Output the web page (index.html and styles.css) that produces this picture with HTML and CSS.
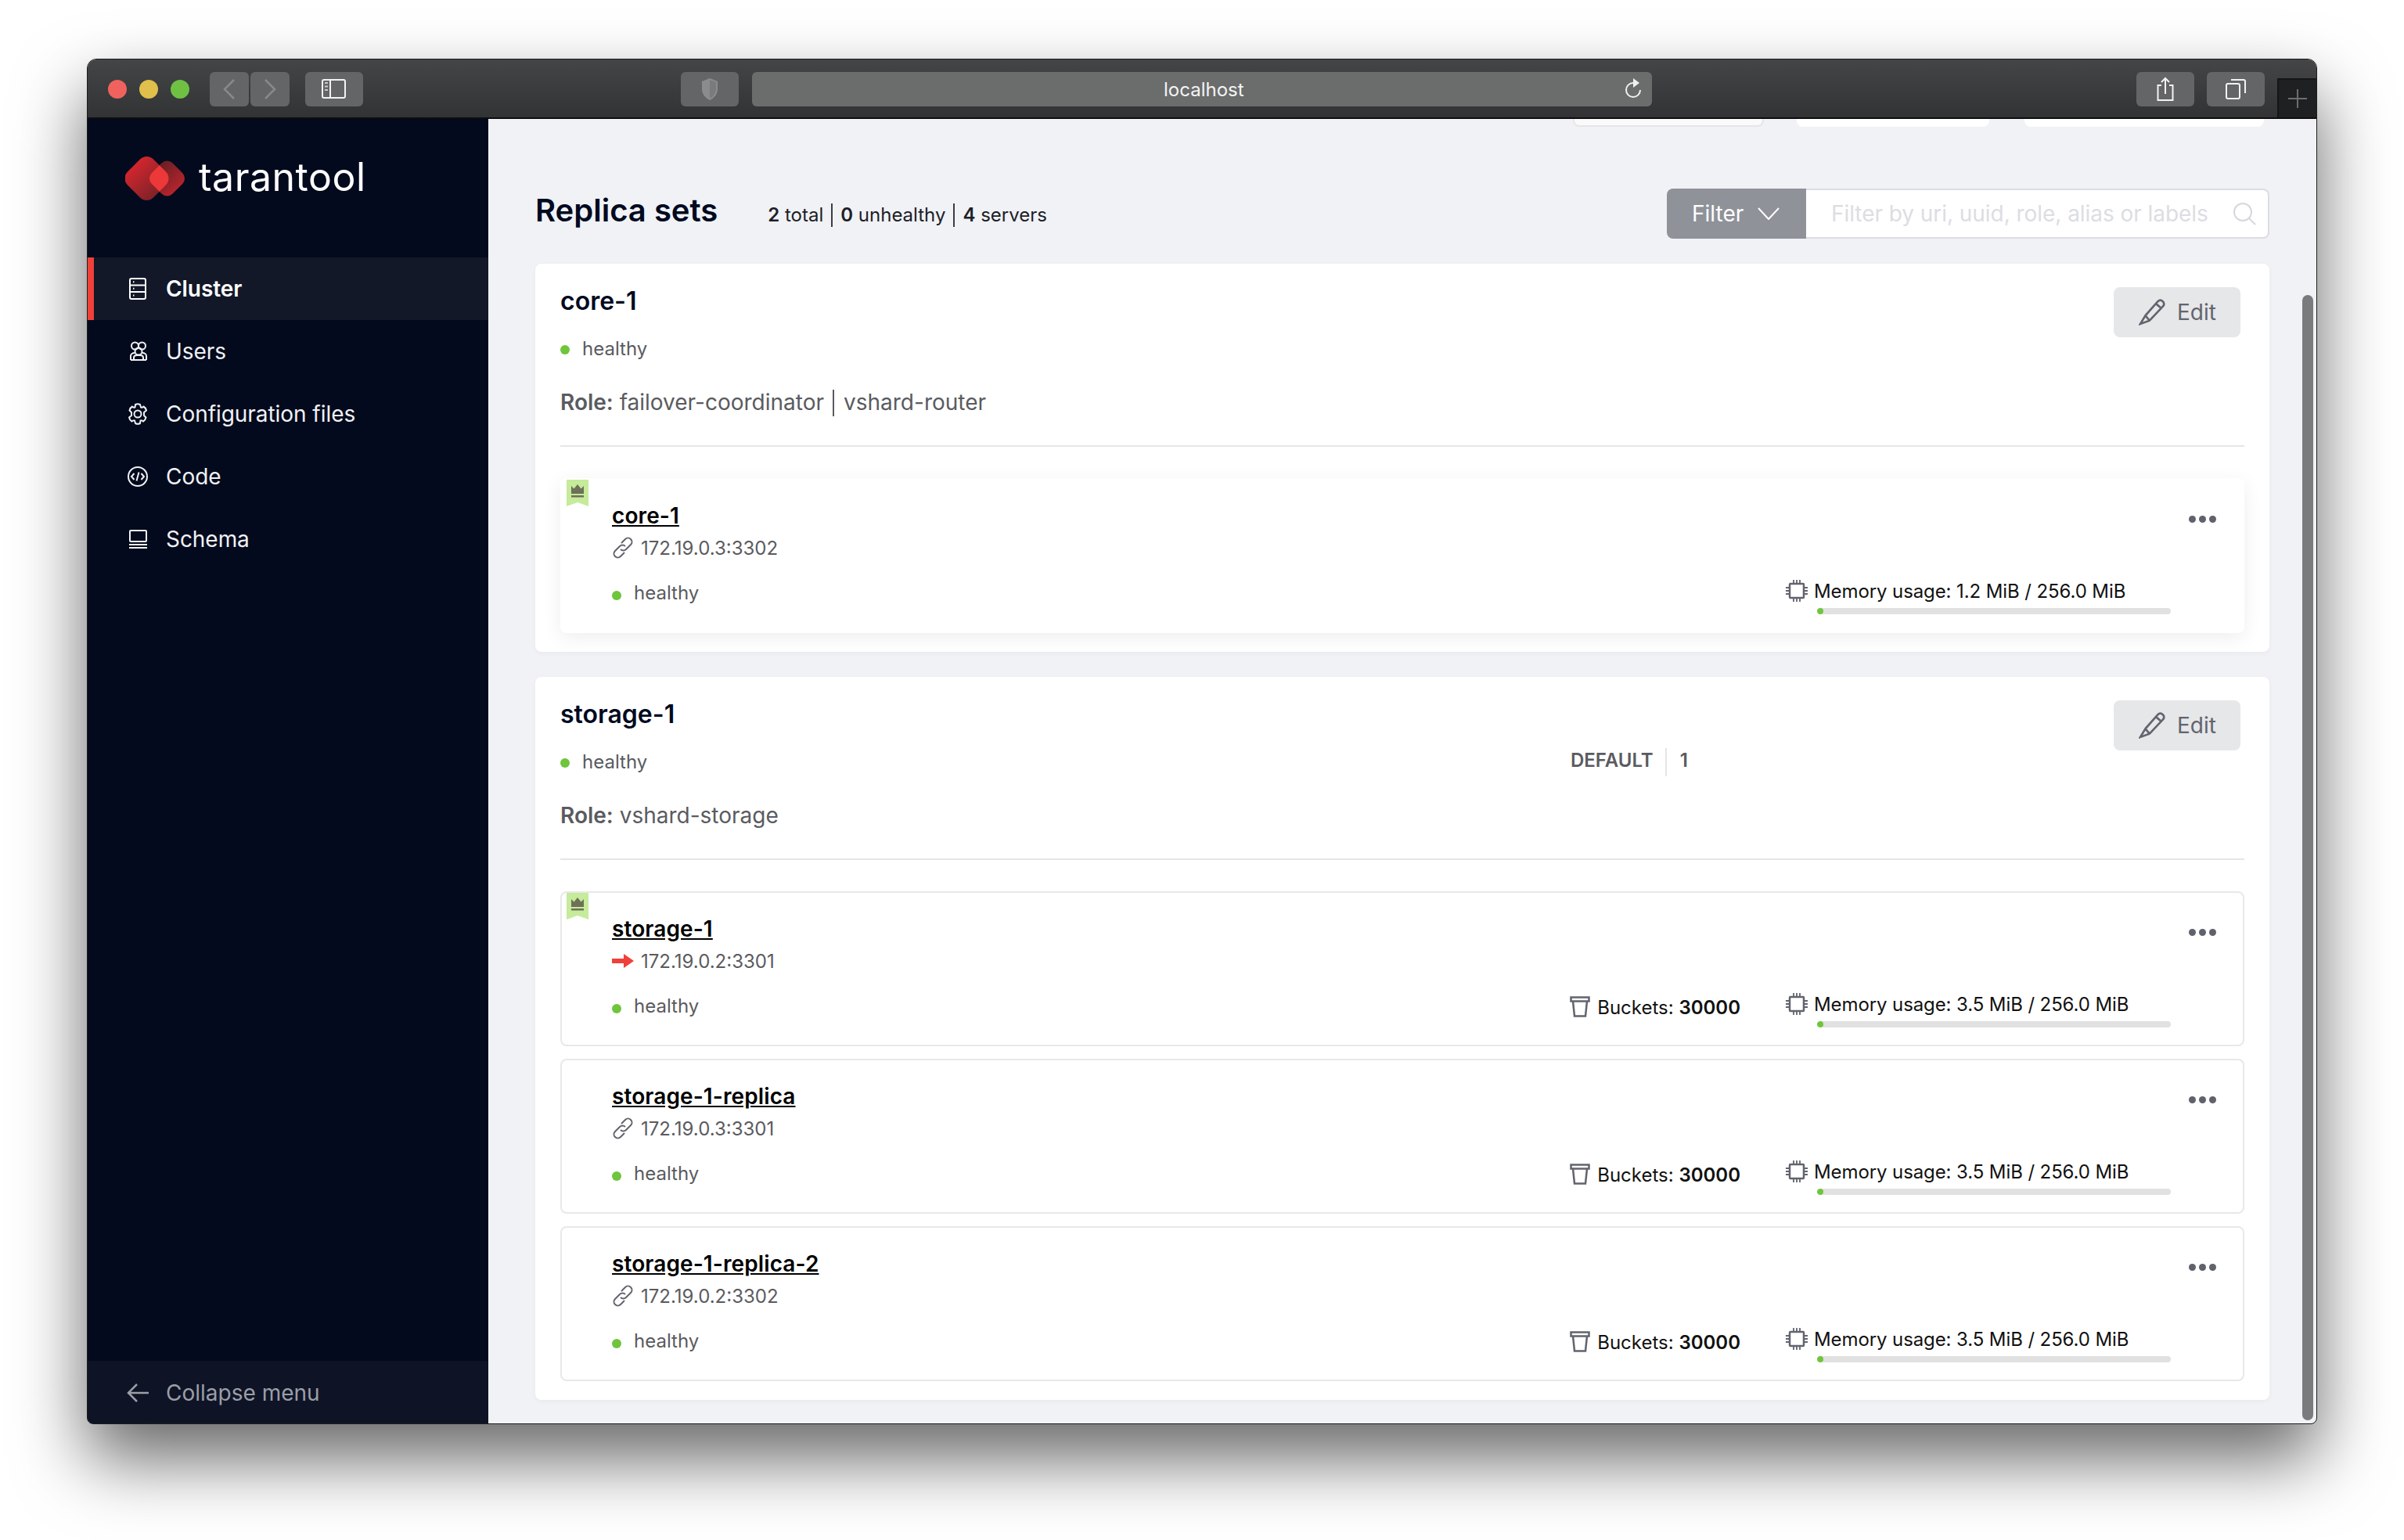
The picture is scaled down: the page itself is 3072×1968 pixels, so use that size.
FILE: index.html
```html
<!DOCTYPE html>
<html lang="en">
<head>
    <meta charset="UTF-8">
    <title>localhost</title>
    <link rel="stylesheet" href="styles.css">
</head>
<body>
    <div class="window">
        <header class="titlebar">
            <div class="lights">
                <span class="light light-red"></span>
                <span class="light light-yellow"></span>
                <span class="light light-green"></span>
            </div>
            <div class="tool tool-nav">
                <svg width="24" height="32" viewBox="0 0 24 32"><path d="M18 4 6 16l12 12" fill="none" stroke="#88898b" stroke-width="2.5"/></svg>
            </div>
            <div class="tool tool-nav tool-next">
                <svg width="24" height="32" viewBox="0 0 24 32"><path d="M6 4l12 12L6 28" fill="none" stroke="#88898b" stroke-width="2.5"/></svg>
            </div>
            <div class="tool tool-side">
                <svg width="32" height="26" viewBox="0 0 32 26"><rect x="1" y="1" width="29" height="23" rx="2" fill="none" stroke="#f2f2f2" stroke-width="2"/><path d="M11 1v23" stroke="#f2f2f2" stroke-width="2"/><path d="M4 5h4M4 9.500h4M4 14h4" stroke="#c9c9c9" stroke-width="2"/></svg>
            </div>
            <div class="tool tool-shield">
                <svg width="26" height="30" viewBox="0 0 26 30"><path d="M13 1 3 5v10c0 6 4 11 10 14 6-3 10-8 10-14V5z" fill="#8b8c8d"/><path d="M13 3v24c4-2 8-7 8-12V6z" fill="#7a7b7c"/></svg>
            </div>
            <div class="urlbar">
                <span class="url-text">localhost</span>
                <svg class="reload" width="24" height="28" viewBox="0 0 24 28"><path d="M12 6a9 9 0 1 0 9 9" fill="none" stroke="#f0f0f0" stroke-width="2"/><path d="M12 0l8 6-8 6z" fill="#f0f0f0"/></svg>
            </div>
            <div class="tool tool-share">
                <svg width="24" height="32" viewBox="0 0 24 32"><path d="M7 11H2.500v19h19V11H17" fill="none" stroke="#f2f2f2" stroke-width="2"/><path d="M12 22V2M7 7l5-5 5 5" fill="none" stroke="#f2f2f2" stroke-width="2"/></svg>
            </div>
            <div class="tool tool-tabs">
                <svg width="26" height="26" viewBox="0 0 26 26"><rect x="1" y="6" width="17" height="19" rx="2" fill="none" stroke="#f2f2f2" stroke-width="2"/><path d="M7 1h16a2 2 0 0 1 2 2v15" fill="none" stroke="#f2f2f2" stroke-width="2"/></svg>
            </div>
            <div class="newtab">
                <svg width="24" height="24" viewBox="0 0 24 24"><path d="M12 0v24M0 12h24" stroke="#6d6e70" stroke-width="2"/></svg>
            </div>
        </header>

        <div class="app">
            <aside class="sidebar">
                <div class="brand">
                    <svg class="brand-mark" width="78" height="58" viewBox="0 0 78 58">
                        <defs>
                            <linearGradient id="leftLobe" gradientUnits="userSpaceOnUse" x1="0" x2="56" y1="0" y2="0">
                                <stop offset="0" stop-color="#d9262f"/>
                                <stop offset="1" stop-color="#752227"/>
                            </linearGradient>
                            <linearGradient id="rightLobe" gradientUnits="userSpaceOnUse" x1="30" x2="77" y1="0" y2="0">
                                <stop offset="0" stop-color="#5f1e24"/>
                                <stop offset="1" stop-color="#bd252d"/>
                            </linearGradient>
                            <clipPath id="overlap">
                                <rect x="4.200" y="4.700" width="46.600" height="46.600" rx="12" transform="rotate(45 27.500 28)"/>
                            </clipPath>
                        </defs>
                        <rect x="34.650" y="9.150" width="37.700" height="37.700" rx="10" fill="url(#rightLobe)" transform="rotate(45 53.500 28)"/>
                        <rect x="4.200" y="4.700" width="46.600" height="46.600" rx="12" fill="url(#leftLobe)" transform="rotate(45 27.500 28)"/>
                        <g clip-path="url(#overlap)">
                            <rect x="34.650" y="9.150" width="37.700" height="37.700" rx="10" fill="#ec3838" transform="rotate(45 53.500 28)"/>
                        </g>
                    </svg>
                    <span class="brand-name">tarantool</span>
                </div>
                <nav class="nav">
                    <a class="nav-item nav-item-active">
                        <svg class="nav-icon" width="28" height="28" viewBox="0 0 28 28" fill="none" stroke="currentColor" stroke-width="2"><rect x="4" y="1" width="20" height="26" rx="2"/><path d="M4 9.500h20M4 18h20"/><path d="M8 5.200h1.500M8 13.700h1.500M8 22.500h1.500"/></svg>
                        Cluster
                    </a>
                    <a class="nav-item">
                        <svg class="nav-icon" width="28" height="28" viewBox="0 0 28 28" fill="none" stroke="currentColor" stroke-width="2"><circle cx="10.500" cy="7" r="4.500"/><circle cx="19.500" cy="7" r="4.500"/><circle cx="15" cy="14" r="4.500"/><path d="M5 25v-5c0-2 2-4 5-4M25 25v-5c0-2-2-4-5-4M5 25h20M9 25v-3c0-2 2-3 4-3h4c2 0 4 1 4 3v3"/></svg>
                        Users
                    </a>
                    <a class="nav-item">
                        <svg class="nav-icon" width="28" height="28" viewBox="0 0 28 28" fill="none" stroke="currentColor" stroke-width="2"><path d="M11 2c2-1 4-1 6 0l1 3.500c1 .5 2 .5 3.500-1 2 1 3 3 3.500 5L22 12v4l2.500 2.500c-.5 2-1.500 4-3.500 5-1.500-1.500-2.500-1.500-3.500-1L17 26c-2 1-4 1-6 0l-1-3.500c-1-.5-2-.5-3.500 1-2-1-3-3-3.500-5L6 16v-4L3.500 9.500c.5-2 1.500-4 3.500-5 1.500 1.500 2.500 1.500 3.500 1z" stroke-linejoin="round"/><circle cx="14" cy="14" r="4.500"/></svg>
                        Configuration files
                    </a>
                    <a class="nav-item">
                        <svg class="nav-icon" width="28" height="28" viewBox="0 0 28 28" fill="none" stroke="currentColor" stroke-width="2"><circle cx="14" cy="14" r="12"/><path d="M9.500 10 6 14l3.500 4M18.500 10l3.500 4-3.500 4M15.500 8.500l-3 11"/></svg>
                        Code
                    </a>
                    <a class="nav-item">
                        <svg class="nav-icon" width="28" height="28" viewBox="0 0 28 28" fill="none" stroke="currentColor" stroke-width="2"><rect x="4" y="3" width="21" height="14" rx="1"/><path d="M3 21h23M3 25h23"/></svg>
                        Schema
                    </a>
                </nav>
                <div class="collapse">
                    <svg width="28" height="26" viewBox="0 0 28 26" fill="none" stroke="currentColor" stroke-width="2.500"><path d="M28 13H2M13 2 2 13l11 11"/></svg>
                    Collapse menu
                </div>
            </aside>

            <main class="main">
                <div class="peek">
                    <span class="peek-box peek-box-line"></span>
                    <span class="peek-box peek-box-mid"></span>
                    <span class="peek-box peek-box-end"></span>
                </div>

                <div class="page-head">
                    <h1 class="page-title">Replica sets</h1>
                    <div class="stats">
                        <span class="stat"><b>2</b> total</span>
                        <span class="stat"><b>0</b> unhealthy</span>
                        <span class="stat"><b>4</b> servers</span>
                    </div>
                    <div class="filter">
                        <div class="filter-btn">
                            Filter
                            <svg width="28" height="16" viewBox="0 0 28 16" fill="none" stroke="#fff" stroke-width="2"><path d="M1 1l13 14L27 1"/></svg>
                        </div>
                        <div class="filter-input">
                            <span class="placeholder">Filter by uri, uuid, role, alias or labels</span>
                            <svg width="30" height="30" viewBox="0 0 30 30" fill="none" stroke="#d6d7dc" stroke-width="2"><circle cx="13" cy="13" r="11"/><path d="M21 21l8 8"/></svg>
                        </div>
                    </div>
                </div>

                <section class="card">
                    <div class="card-head">
                        <h2 class="card-title">core-1</h2>
                        <button class="edit">
                            <svg width="34" height="34" viewBox="0 0 32 32" fill="none" stroke="currentColor" stroke-width="2.500"><path d="M8 20 23 3c2-2 4-2 6 0s2 4 0 6L13 26l-11 4zM21 6l6 5M8 20l5 6"/></svg>
                            Edit
                        </button>
                    </div>
                    <div class="card-status">
                        <div class="status status-head"><span class="dot"></span>healthy</div>
                    </div>
                    <p class="role"><b>Role:</b> failover-coordinator<span class="role-sep"></span>vshard-router</p>
                    <hr class="divider">
                    <div class="instances">
                        <article class="instance instance-lifted">
                            <svg class="leader" width="28" height="34" viewBox="0 0 28 34"><path d="M0 0h28v34l-14-5-14 5z" fill="#c5eb9b"/><path d="M6 8l3.500 3.500L14 6l4.500 5.500L22 8v10H6z" fill="#6f7058"/><path d="M6 20h16v2.500H6z" fill="#6f7058"/></svg>
                            <div class="instance-top">
                                <a class="instance-name">core-1</a>
                                <div class="kebab"><span></span><span></span><span></span></div>
                            </div>
                            <div class="uri">
                                <svg width="28" height="28" viewBox="0 0 28 28" fill="none" stroke="#62646e" stroke-width="2"><path d="M12 8l5-5c2-2 5-2 7 0s2 5 0 7l-6 6c-2 2-5 2-7 0M16 20l-5 5c-2 2-5 2-7 0s-2-5 0-7l6-6c2-2 5-2 7 0"/></svg>
                                172.19.0.3:3302
                            </div>
                            <div class="instance-foot">
                                <div class="status"><span class="dot"></span>healthy</div>
                                <div class="memory">
                                    <div class="memory-text">
                                        <svg width="28" height="28" viewBox="0 0 28 28" fill="none" stroke="#62646e" stroke-width="2"><rect x="5" y="5" width="18" height="18" rx="1" stroke-width="2.500"/><path d="M10 0v5M14 0v5M18 0v5M10 23v5M14 23v5M18 23v5M0 10h5M0 14h5M0 18h5M23 10h5M23 14h5M23 18h5" stroke-width="1.800"/></svg>
                                        Memory usage: 1.2 MiB / 256.0 MiB
                                    </div>
                                    <div class="bar"><span class="bar-fill"></span></div>
                                </div>
                            </div>
                        </article>
                    </div>
                </section>

                <section class="card">
                    <div class="card-head">
                        <h2 class="card-title">storage-1</h2>
                        <button class="edit">
                            <svg width="34" height="34" viewBox="0 0 32 32" fill="none" stroke="currentColor" stroke-width="2.500"><path d="M8 20 23 3c2-2 4-2 6 0s2 4 0 6L13 26l-11 4zM21 6l6 5M8 20l5 6"/></svg>
                            Edit
                        </button>
                    </div>
                    <div class="card-status">
                        <div class="status status-head status-wide"><span class="dot"></span>healthy</div>
                        <div class="weight">
                            <span class="weight-name">DEFAULT</span>
                            <span class="weight-sep"></span>
                            <span class="weight-name">1</span>
                        </div>
                    </div>
                    <p class="role"><b>Role:</b> vshard-storage</p>
                    <hr class="divider">
                    <div class="instances">
                        <article class="instance">
                            <svg class="leader" width="28" height="34" viewBox="0 0 28 34"><path d="M0 0h28v34l-14-5-14 5z" fill="#c5eb9b"/><path d="M6 8l3.500 3.500L14 6l4.500 5.500L22 8v10H6z" fill="#6f7058"/><path d="M6 20h16v2.500H6z" fill="#6f7058"/></svg>
                            <div class="instance-top">
                                <a class="instance-name">storage-1</a>
                                <div class="kebab"><span></span><span></span><span></span></div>
                            </div>
                            <div class="uri">
                                <svg width="28" height="28" viewBox="0 0 28 28"><path d="M0 11h15V5l13 9-13 9v-6H0z" fill="#ef4139"/></svg>
                                172.19.0.2:3301
                            </div>
                            <div class="instance-foot">
                                <div class="status"><span class="dot"></span>healthy</div>
                                <div class="buckets">
                                    <svg width="28" height="28" viewBox="0 0 28 28" fill="none" stroke="#62646e" stroke-width="2.500"><path d="M2.500 1.500h23v5h-23zM5 6.500l2 19h14l2-19"/></svg>
                                    Buckets:&nbsp;<b>30000</b>
                                </div>
                                <div class="memory">
                                    <div class="memory-text">
                                        <svg width="28" height="28" viewBox="0 0 28 28" fill="none" stroke="#62646e" stroke-width="2"><rect x="5" y="5" width="18" height="18" rx="1" stroke-width="2.500"/><path d="M10 0v5M14 0v5M18 0v5M10 23v5M14 23v5M18 23v5M0 10h5M0 14h5M0 18h5M23 10h5M23 14h5M23 18h5" stroke-width="1.800"/></svg>
                                        Memory usage: 3.5 MiB / 256.0 MiB
                                    </div>
                                    <div class="bar"><span class="bar-fill"></span></div>
                                </div>
                            </div>
                        </article>
                        <article class="instance">
                            <div class="instance-top">
                                <a class="instance-name">storage-1-replica</a>
                                <div class="kebab"><span></span><span></span><span></span></div>
                            </div>
                            <div class="uri">
                                <svg width="28" height="28" viewBox="0 0 28 28" fill="none" stroke="#62646e" stroke-width="2"><path d="M12 8l5-5c2-2 5-2 7 0s2 5 0 7l-6 6c-2 2-5 2-7 0M16 20l-5 5c-2 2-5 2-7 0s-2-5 0-7l6-6c2-2 5-2 7 0"/></svg>
                                172.19.0.3:3301
                            </div>
                            <div class="instance-foot">
                                <div class="status"><span class="dot"></span>healthy</div>
                                <div class="buckets">
                                    <svg width="28" height="28" viewBox="0 0 28 28" fill="none" stroke="#62646e" stroke-width="2.500"><path d="M2.500 1.500h23v5h-23zM5 6.500l2 19h14l2-19"/></svg>
                                    Buckets:&nbsp;<b>30000</b>
                                </div>
                                <div class="memory">
                                    <div class="memory-text">
                                        <svg width="28" height="28" viewBox="0 0 28 28" fill="none" stroke="#62646e" stroke-width="2"><rect x="5" y="5" width="18" height="18" rx="1" stroke-width="2.500"/><path d="M10 0v5M14 0v5M18 0v5M10 23v5M14 23v5M18 23v5M0 10h5M0 14h5M0 18h5M23 10h5M23 14h5M23 18h5" stroke-width="1.800"/></svg>
                                        Memory usage: 3.5 MiB / 256.0 MiB
                                    </div>
                                    <div class="bar"><span class="bar-fill"></span></div>
                                </div>
                            </div>
                        </article>
                        <article class="instance">
                            <div class="instance-top">
                                <a class="instance-name">storage-1-replica-2</a>
                                <div class="kebab"><span></span><span></span><span></span></div>
                            </div>
                            <div class="uri">
                                <svg width="28" height="28" viewBox="0 0 28 28" fill="none" stroke="#62646e" stroke-width="2"><path d="M12 8l5-5c2-2 5-2 7 0s2 5 0 7l-6 6c-2 2-5 2-7 0M16 20l-5 5c-2 2-5 2-7 0s-2-5 0-7l6-6c2-2 5-2 7 0"/></svg>
                                172.19.0.2:3302
                            </div>
                            <div class="instance-foot">
                                <div class="status"><span class="dot"></span>healthy</div>
                                <div class="buckets">
                                    <svg width="28" height="28" viewBox="0 0 28 28" fill="none" stroke="#62646e" stroke-width="2.500"><path d="M2.500 1.500h23v5h-23zM5 6.500l2 19h14l2-19"/></svg>
                                    Buckets:&nbsp;<b>30000</b>
                                </div>
                                <div class="memory">
                                    <div class="memory-text">
                                        <svg width="28" height="28" viewBox="0 0 28 28" fill="none" stroke="#62646e" stroke-width="2"><rect x="5" y="5" width="18" height="18" rx="1" stroke-width="2.500"/><path d="M10 0v5M14 0v5M18 0v5M10 23v5M14 23v5M18 23v5M0 10h5M0 14h5M0 18h5M23 10h5M23 14h5M23 18h5" stroke-width="1.800"/></svg>
                                        Memory usage: 3.5 MiB / 256.0 MiB
                                    </div>
                                    <div class="bar"><span class="bar-fill"></span></div>
                                </div>
                            </div>
                        </article>
                    </div>
                </section>
                <div class="scrollbar"></div>
            </main>
        </div>
    </div>
</body>
</html>
```

FILE: styles.css
```css
* {
    margin: 0;
    padding: 0;
    box-sizing: border-box;
}
html, body {
    height: 100%;
    overflow: hidden;
}
body {
    background: #ffffff;
    padding: 75px 0 0 111px;
    font-family: 'Inter', 'Liberation Sans', sans-serif;
    font-size: 28px;
    color: #000;
}
b {
    font-weight: 600;
}

/* browser window */
.window {
    width: 2850px;
    height: 1745px;
    border: 1px solid #1c1c1e;
    border-radius: 12px 12px 8px 8px;
    overflow: hidden;
    box-shadow: 0 44px 90px rgba(0, 0, 0, 0.6);
    display: flex;
    flex-direction: column;
    background: #f0f2f6;
}
.titlebar {
    position: relative;
    flex: 0 0 76px;
    display: flex;
    align-items: flex-start;
    padding-top: 16px;
    padding-left: 26px;
    background: linear-gradient(180deg, #444547, #323335);
    border-bottom: 2px solid #0d0d0e;
}
.lights {
    display: flex;
    gap: 16px;
    padding-top: 10px;
}
.light {
    width: 24px;
    height: 24px;
    border-radius: 50%;
}
.light-red { background: #f0625d; }
.light-yellow { background: #e0bf4a; }
.light-green { background: #6fc144; }
.tool {
    height: 44px;
    border-radius: 6px;
    background: #646566;
    display: flex;
    align-items: center;
    justify-content: center;
}
.tool-nav {
    width: 50px;
    margin-left: 26px;
}
.tool-next {
    margin-left: 2px;
}
.tool-side {
    width: 74px;
    margin-left: 20px;
}
.tool-shield {
    width: 74px;
    margin-left: 406px;
}
.urlbar {
    width: 1150px;
    height: 44px;
    margin-left: 17px;
    border-radius: 6px;
    background: #6b6c6c;
    display: flex;
    align-items: center;
    padding-left: 526px;
    padding-right: 12px;
    justify-content: space-between;
}
.url-text {
    font-size: 24px;
    font-family: 'Inter', sans-serif;
    color: #f4f4f4;
}
.tool-share {
    width: 74px;
    margin-left: 619px;
}
.tool-tabs {
    width: 74px;
    margin-left: 16px;
}
.newtab {
    position: absolute;
    right: 0;
    bottom: 0;
    width: 50px;
    height: 50px;
    background: #1f2021;
    border-left: 2px solid #151516;
    border-top: 2px solid #151516;
    display: flex;
    align-items: center;
    justify-content: center;
}
.app {
    flex: 1;
    display: flex;
    min-height: 0;
}

/* sidebar */
.sidebar {
    flex: 0 0 512px;
    background: #040a1d;
    display: flex;
    flex-direction: column;
}
.brand {
    height: 177px;
    padding: 48px 0 0 48px;
    display: flex;
    align-items: flex-start;
}
.brand-mark {
    flex: none;
}
.brand-name {
    margin-left: 16px;
    font-size: 50px;
    line-height: 52px;
    letter-spacing: 0.5px;
    color: #fff;
}
.nav {
    flex: 1;
}
.nav-item {
    height: 80px;
    display: flex;
    align-items: center;
    gap: 22px;
    padding-left: 50px;
    color: #f0f1f5;
    font-size: 28px;
    letter-spacing: -0.05px;
}
.nav-icon {
    flex: none;
}
.nav-item-active {
    background: #121828;
    border-left: 8px solid #ef4139;
    padding-left: 42px;
    color: #fff;
    font-weight: 600;
}
.collapse {
    height: 80px;
    display: flex;
    align-items: center;
    gap: 22px;
    padding: 2px 0 0 50px;
    background: #0e1426;
    color: #9c9ea7;
}

/* main column */
.main {
    position: relative;
    flex: 1;
    min-width: 0;
    padding: 0 60px;
    overflow: hidden;
}
.peek {
    display: flex;
    justify-content: flex-end;
    height: 10px;
    padding-right: 7px;
    margin-bottom: 79px;
}
.peek-box {
    height: 10px;
    background: #fff;
    border-radius: 0 0 8px 8px;
}
.peek-box-line {
    width: 244px;
    border: 2px solid #e5e6ea;
    border-top: none;
    background: #fafafa;
}
.peek-box-mid {
    width: 246px;
    margin-left: 42px;
}
.peek-box-end {
    width: 306px;
    margin-left: 45px;
}
.page-head {
    height: 64px;
    display: flex;
    align-items: center;
    margin-bottom: 32px;
}
.page-title {
    font-size: 40px;
    font-weight: 600;
    line-height: 52px;
    margin-bottom: 9px;
    color: #000a1f;
}
.stats {
    display: flex;
    margin-left: 64px;
    margin-top: 3px;
    font-size: 24px;
    color: #1d2026;
}
.stat {
    padding: 0 10px;
    border-left: 2px solid #3a3d44;
    line-height: 30px;
}
.stat:first-child {
    border-left: none;
    padding-left: 0;
}
.filter {
    margin-left: auto;
    width: 770px;
    height: 64px;
    display: flex;
}
.filter-btn {
    flex: 0 0 178px;
    background: #8f9299;
    border-radius: 8px 0 0 8px;
    color: #fff;
    display: flex;
    align-items: center;
    gap: 18px;
    padding-left: 32px;
}
.filter-input {
    flex: 1;
    background: #fff;
    border: 2px solid #dcdde2;
    border-left: none;
    border-radius: 0 8px 8px 0;
    display: flex;
    align-items: center;
    justify-content: space-between;
    padding: 0 15px 0 32px;
    letter-spacing: -0.05px;
}
.placeholder {
    color: #dcdde3;
}

/* replica set card */
.card {
    background: #fff;
    border-radius: 8px;
    padding: 0 32px 24px;
    margin-bottom: 32px;
    box-shadow: 0 2px 6px rgba(0, 0, 0, 0.04);
}
.card-head {
    display: flex;
    justify-content: space-between;
    align-items: flex-start;
    height: 68px;
    padding-top: 28px;
}
.card-title {
    font-size: 32px;
    font-weight: 600;
    line-height: 40px;
    color: #000a1f;
}
.edit {
    width: 162px;
    height: 64px;
    margin-top: 2px;
    margin-right: 5px;
    border: none;
    border-radius: 8px;
    background: #e6e7e9;
    color: #62646e;
    font-family: inherit;
    font-size: 28px;
    display: flex;
    align-items: center;
    gap: 15px;
    padding-left: 32px;
}
.card-status {
    display: flex;
    align-items: center;
    height: 32px;
    margin-top: 25px;
}
.status {
    display: flex;
    align-items: center;
    font-size: 24px;
    line-height: 32px;
    color: #5a5b60;
}
.dot {
    width: 12px;
    height: 12px;
    border-radius: 50%;
    background: #6fc53c;
    margin-right: 16px;
    margin-top: 6px;
}
.status-head .dot {
    margin-top: 2px;
}
.status-wide {
    flex: 0 0 1291px;
}
.weight {
    display: flex;
    align-items: center;
    font-size: 24px;
    font-weight: 600;
    color: #5a5b60;
}
.weight-name {
    margin-bottom: 6px;
}
.weight-sep {
    width: 2px;
    height: 36px;
    background: #e5e5e5;
    margin: 0 17px 0 15px;
}
.role {
    margin-top: 32px;
    line-height: 40px;
    color: #5a5b60;
}
.role-sep {
    display: inline-block;
    width: 2px;
    height: 34px;
    background: #5a5b60;
    margin: 0 12px 0 11px;
    vertical-align: -8px;
}
.divider {
    border: none;
    height: 2px;
    background: #e5e5e5;
    margin: 35px 0 40px;
}

/* instances */
.instances {
    display: flex;
    flex-direction: column;
    gap: 16px;
}
.instance {
    position: relative;
    height: 198px;
    border: 2px solid #e8e8e8;
    border-radius: 8px;
    padding: 28px 0 0 64px;
}
.instance-lifted {
    border-color: transparent;
    box-shadow: 0 6px 24px rgba(0, 0, 0, 0.07);
}
.leader {
    position: absolute;
    left: 6px;
    top: 0;
}
.instance-top {
    display: flex;
    justify-content: space-between;
    height: 36px;
}
.instance-name {
    font-size: 28px;
    font-weight: 600;
    line-height: 36px;
    letter-spacing: 0.1px;
    text-decoration: underline;
    color: #000;
}
.kebab {
    display: flex;
    gap: 4px;
    margin: 18px 34px 0 0;
}
.kebab span {
    width: 9px;
    height: 9px;
    border-radius: 50%;
    background: #5f616b;
}
.uri {
    display: flex;
    align-items: center;
    gap: 9px;
    height: 32px;
    margin-top: 7px;
    font-size: 24px;
    color: #5a5b60;
}
.instance-foot {
    display: flex;
    height: 46px;
    margin-top: 24px;
}
.instance-foot .status {
    flex: 1;
    align-self: flex-start;
    margin-top: 2px;
}
.buckets {
    display: flex;
    align-items: center;
    height: 32px;
    margin: 3px 58px 0 0;
    font-size: 24px;
    color: #111;
}
.buckets svg {
    margin-right: 8px;
}
.memory {
    width: 492px;
    margin-right: 92px;
}
.memory-text {
    display: flex;
    align-items: center;
    gap: 8px;
    height: 30px;
    font-size: 24px;
    letter-spacing: -0.1px;
    color: #111;
}
.bar {
    height: 8px;
    margin: 7px 0 0 40px;
    border-radius: 4px;
    background: #e1e1e1;
    overflow: hidden;
}
.bar-fill {
    display: block;
    width: 8px;
    height: 8px;
    border-radius: 4px;
    background: #6fc53c;
}
.scrollbar {
    position: absolute;
    right: 4px;
    top: 225px;
    bottom: 4px;
    width: 14px;
    border-radius: 7px;
    background: #7a7b7d;
}
```
